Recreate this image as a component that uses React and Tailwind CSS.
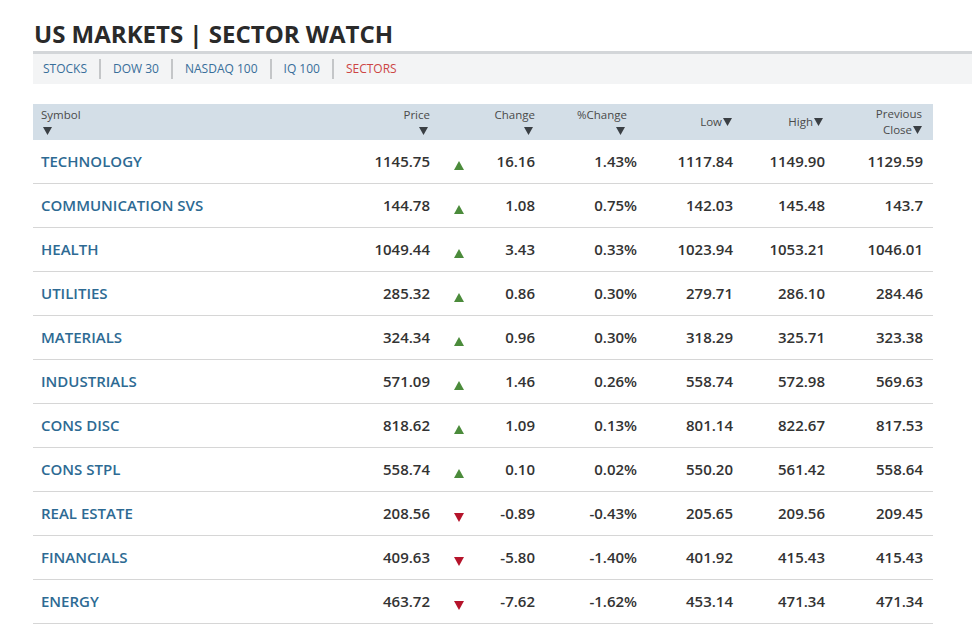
const navItems = ["STOCKS", "DOW 30", "NASDAQ 100", "IQ 100", "SECTORS"];

const rows = [
  ["TECHNOLOGY", "1145.75", true, "16.16", "1.43%", "1117.84", "1149.90", "1129.59"],
  ["COMMUNICATION SVS", "144.78", true, "1.08", "0.75%", "142.03", "145.48", "143.7"],
  ["HEALTH", "1049.44", true, "3.43", "0.33%", "1023.94", "1053.21", "1046.01"],
  ["UTILITIES", "285.32", true, "0.86", "0.30%", "279.71", "286.10", "284.46"],
  ["MATERIALS", "324.34", true, "0.96", "0.30%", "318.29", "325.71", "323.38"],
  ["INDUSTRIALS", "571.09", true, "1.46", "0.26%", "558.74", "572.98", "569.63"],
  ["CONS DISC", "818.62", true, "1.09", "0.13%", "801.14", "822.67", "817.53"],
  ["CONS STPL", "558.74", true, "0.10", "0.02%", "550.20", "561.42", "558.64"],
  ["REAL ESTATE", "208.56", false, "-0.89", "-0.43%", "205.65", "209.56", "209.45"],
  ["FINANCIALS", "409.63", false, "-5.80", "-1.40%", "401.92", "415.43", "415.43"],
  ["ENERGY", "463.72", false, "-7.62", "-1.62%", "453.14", "471.34", "471.34"],
];

const cols = "grid grid-cols-[297px_110px_38px_67px_102px_96px_92px_98px]";

const Arrow = ({ up }) =>
  up ? (
    <svg width="10" height="9" viewBox="0 0 10 9" className="mt-2">
      <polygon points="5,0 10,9 0,9" fill="#4b8b3b" />
    </svg>
  ) : (
    <svg width="10" height="9" viewBox="0 0 10 9" className="mt-2">
      <polygon points="0,0 10,0 5,9" fill="#b5142b" />
    </svg>
  );

// small sort caret used in the header
const Caret = ({ className = "" }) => (
  <svg width="9" height="8" viewBox="0 0 9 8" className={className}>
    <polygon points="0,0 9,0 4.5,8" fill="#3a3f44" />
  </svg>
);

const App = () => {
  return (
    <div className="w-[972px] h-[635px] overflow-hidden bg-white font-['Open_Sans',sans-serif] text-[#333]">
      <div className="pl-[33px] pt-[19px]">
        <h1 className="text-[24px] leading-[30px] font-bold text-[#2a2a2a] pl-[1px]">
          US MARKETS | SECTOR WATCH
        </h1>
        <div className="mt-[2px] border-t-[3px] border-[#d3d6d9] bg-[#f3f4f5] h-[33px] flex items-center pl-[10px]">
          {navItems.map((item, i) => (
            <div key={item} className="flex items-center">
              <span
                className={`text-[12px] ${item === "SECTORS" ? "text-[#cc4444]" : "text-[#386e9a]"}`}
              >
                {item}
              </span>
              {i < navItems.length - 1 && (
                <span className="mx-[12px] w-[2px] h-[20px] bg-[#c4c6c8]"></span>
              )}
            </div>
          ))}
        </div>

        <div className="mt-[20px] w-[900px]">
          <div className={`${cols} bg-[#d3dee7] h-[36px] text-[11.5px] text-[#4a4a4a] leading-[16px]`}>
            <div className="pl-[8px] pt-[3px] flex flex-col">
              <span>Symbol</span>
              <Caret className="mt-[4px] ml-[2px]" />
            </div>
            <div className="pr-[10px] pt-[3px] flex flex-col items-end">
              <span>Price</span>
              <Caret className="mt-[4px] mr-[2px]" />
            </div>
            <div></div>
            <div className="pr-[10px] pt-[3px] flex flex-col items-end">
              <span>Change</span>
              <Caret className="mt-[4px] mr-[2px]" />
            </div>
            <div className="pr-[20px] pt-[3px] flex flex-col items-end">
              <span>%Change</span>
              <Caret className="mt-[4px] mr-[2px]" />
            </div>
            <div className="pr-[11px] flex items-center justify-end gap-[1px]">
              Low<Caret />
            </div>
            <div className="pr-[12px] flex items-center justify-end gap-[1px]">
              High<Caret />
            </div>
            <div className="pr-[11px] pt-[2px] flex flex-col items-end">
              <span>Previous</span>
              <span className="flex items-center gap-[1px]">
                Close<Caret />
              </span>
            </div>
          </div>

          {rows.map(([name, price, up, chg, pct, low, high, prev]) => (
            <div
              key={name}
              className={`${cols} h-[44px] border-b border-[#d6d6d6] items-center text-[15px] font-semibold`}
            >
              <div className="pl-[8px] text-[#2d6a93]">{name}</div>
              <div className="pr-[10px] text-right">{price}</div>
              <div className="flex justify-center">
                <Arrow up={up} />
              </div>
              <div className="pr-[10px] text-right">{chg}</div>
              <div className="pr-[10px] text-right">{pct}</div>
              <div className="pr-[10px] text-right">{low}</div>
              <div className="pr-[10px] text-right">{high}</div>
              <div className="pr-[10px] text-right">{prev}</div>
            </div>
          ))}
        </div>
      </div>
    </div>
  );
};

export default App;
